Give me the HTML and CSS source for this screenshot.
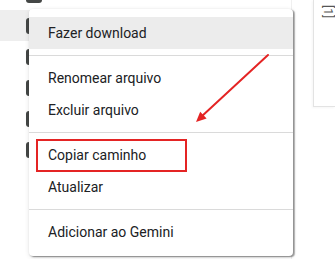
FILE: index.html
```html
<!DOCTYPE html>
<html lang="pt-BR">
<head>
<meta charset="utf-8">
<title>Menu</title>
<link rel="stylesheet" href="styles.css">
</head>
<body>
<div class="page">
  <div class="bg">
    <div class="list">
      <div class="row"><span class="check"></span></div>
      <div class="row row-active"><span class="check"></span></div>
      <div class="row"><span class="check"></span></div>
      <div class="row"><span class="check"></span></div>
      <div class="row"><span class="check"></span></div>
      <div class="row"><span class="check"></span></div>
      <div class="row"></div>
    </div>
    <div class="side">
      <div class="panel"><span class="panel-text">[1]</span></div>
    </div>
  </div>

  <div class="menu">
    <div class="item item-hover">Fazer download</div>
    <div class="sep"></div>
    <div class="item">Renomear arquivo</div>
    <div class="item">Excluir arquivo</div>
    <div class="sep"></div>
    <div class="item">Copiar caminho</div>
    <div class="item">Atualizar</div>
    <div class="sep"></div>
    <div class="item">Adicionar ao Gemini</div>
  </div>

  <div class="highlight-box"></div>

  <svg class="arrow" width="335" height="259" viewBox="0 0 335 259">
    <line x1="268" y1="55" x2="201" y2="117" stroke="#e42424" stroke-width="2" stroke-linecap="round"/>
    <polygon points="196,122 206.6,118.6 200.2,111.7" fill="#e42424"/>
  </svg>
</div>
</body>
</html>
```

FILE: styles.css
```css
html, body {
  margin: 0;
  padding: 0;
  background: #ffffff;
}

.page {
  position: relative;
  width: 335px;
  height: 259px;
  overflow: hidden;
  font-family: Roboto, "Noto Sans", "Liberation Sans", sans-serif;
}

.bg {
  display: flex;
  height: 100%;
}

.list {
  width: 294px;
  border-right: 1px solid #f0f0f0;
  margin-top: -21px;
  display: flex;
  flex-direction: column;
}

.row {
  height: 31px;
  flex: none;
  display: flex;
  align-items: center;
  padding-left: 26px;
}

.row-active {
  background: #eeeeee;
}

.check {
  width: 16px;
  height: 16px;
  border-radius: 3px;
  background: #444746;
}

.side {
  flex: 1;
  padding-left: 21px;
}

.panel {
  height: 106px;
  border-left: 1px solid #e3e3e3;
  border-bottom: 1px solid #e3e3e3;
  box-shadow: -1px 1px 2px rgba(0,0,0,0.04);
  padding-left: 8px;
  overflow: hidden;
}

.panel-text {
  display: inline-block;
  font-size: 12px;
  color: #555;
  transform: rotate(90deg);
  transform-origin: 6px 6px;
  margin-top: -2px;
  line-height: 12px;
}

.menu {
  position: absolute;
  left: 29px;
  top: 9px;
  width: 264px;
  background: #ffffff;
  border-radius: 4px;
  padding: 8px 0;
  box-shadow: 2px 1px 1px rgba(0,0,0,0.22), 1px 1px 2px rgba(0,0,0,0.3), 0 1px 5px rgba(0,0,0,0.1);
}

.item {
  height: 32px;
  display: flex;
  align-items: center;
  padding-left: 19px;
  font-size: 14px;
  color: #202124;
  white-space: nowrap;
}

.item-hover {
  background: #ececec;
}

.sep {
  height: 1px;
  background: #dadada;
  margin: 6px 0;
}

.highlight-box {
  position: absolute;
  left: 36px;
  top: 139px;
  width: 147px;
  height: 29px;
  border: 2px solid #e42424;
}

.arrow {
  position: absolute;
  left: 0;
  top: 0;
  pointer-events: none;
}
```
